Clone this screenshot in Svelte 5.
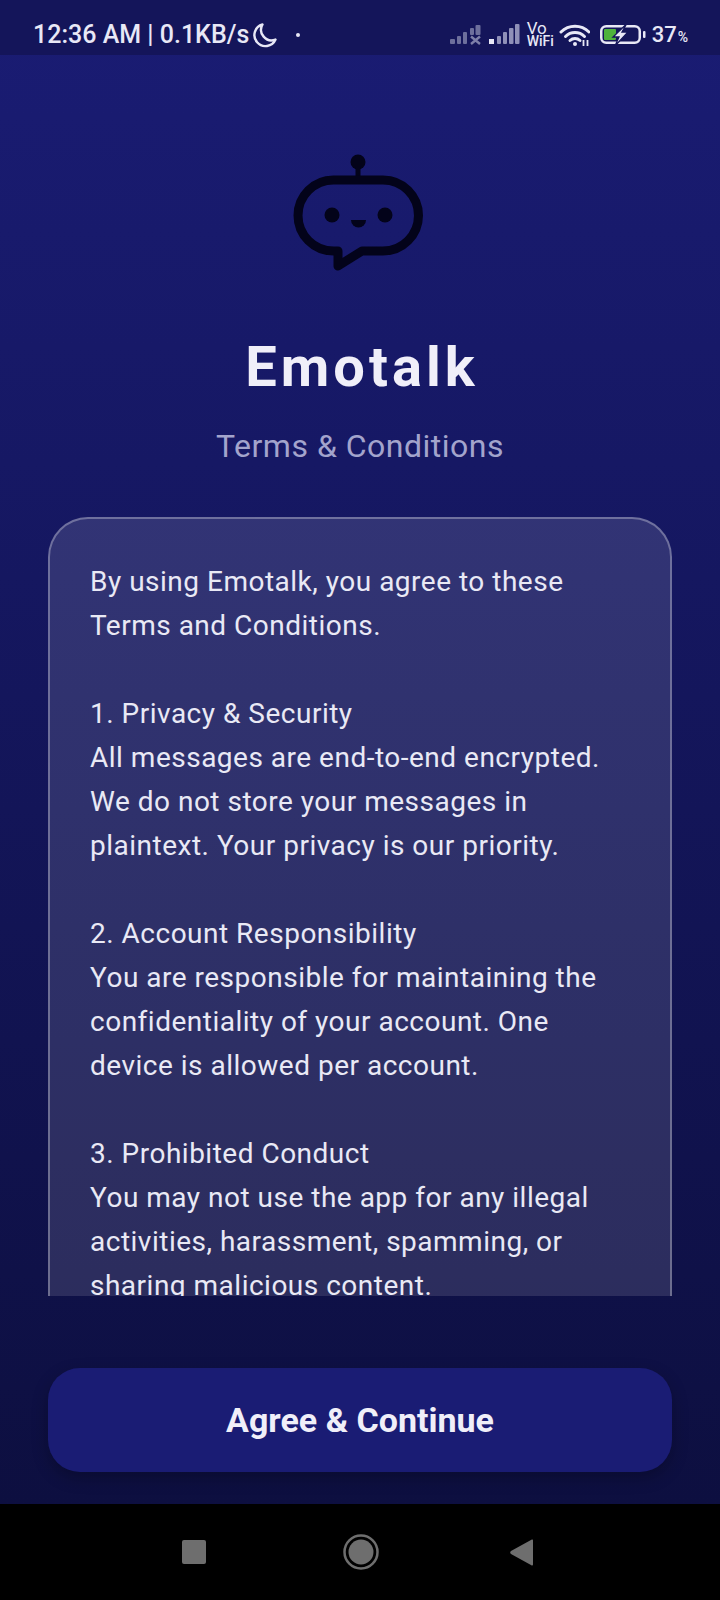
<script>
  const paragraphs = [
    ['By using Emotalk, you agree to these', 'Terms and Conditions.'],
    ['1. Privacy & Security', 'All messages are end-to-end encrypted.', 'We do not store your messages in', 'plaintext. Your privacy is our priority.'],
    ['2. Account Responsibility', 'You are responsible for maintaining the', 'confidentiality of your account. One', 'device is allowed per account.'],
    ['3. Prohibited Conduct', 'You may not use the app for any illegal', 'activities, harassment, spamming, or', 'sharing malicious content.']
  ];
</script>

<div class="screen">
  <header class="status">
    <div class="left">
      <span class="time">12:36 AM | 0.1KB/s</span>
      <svg class="moon" width="24" height="26" viewBox="0 0 24 26"><path d="M9.500 2.500A11 11 0 1 0 22.500 17.500 10.500 10.500 0 0 1 9.500 2.500z" fill="none" stroke="#e8e8f6" stroke-width="2.400" stroke-linejoin="round"/></svg>
      <span class="dot"></span>
    </div>
    <div class="right">
      <svg class="sig1" width="31" height="21" viewBox="0 0 31 21" fill="#6d6f9c">
        <rect x="0" y="15" width="5" height="5" rx="1"/><rect x="7" y="12" width="4" height="8" rx="1"/><rect x="13" y="8" width="4" height="12" rx="1"/><rect x="20" y="4" width="4" height="7" rx="1"/><rect x="25.500" y="1" width="5" height="10" rx="1"/>
        <path d="M21 12.500l9 7.500M30 12.500l-9 7.500" stroke="#7d7fa8" stroke-width="2.400"/>
      </svg>
      <svg class="sig2" width="31" height="21" viewBox="0 0 31 21" fill="#8f90b8">
        <rect x="0" y="15" width="5" height="5" fill="#e8e8f6"/><rect x="8" y="12" width="4" height="8" rx="1"/><rect x="14" y="8" width="4" height="12" rx="1"/><rect x="20" y="4" width="4.500" height="16" rx="1"/><rect x="26" y="0" width="4.500" height="20" rx="1"/>
      </svg>
      <span class="vowifi"><span class="vo">Vo</span><span>WiFi</span></span>
      <svg class="wifi" width="31" height="24" viewBox="0 0 31 24" fill="none" stroke="#e8e8f6" stroke-width="3" stroke-linecap="round">
        <path d="M2 9a20 20 0 0 1 28 0"/><path d="M6.500 13.500a13.500 13.500 0 0 1 19 0"/><path d="M11 17.500a7.500 7.500 0 0 1 10 0"/>
        <circle cx="16" cy="21" r="2" fill="#e8e8f6" stroke="none"/>
        <path d="M24.500 23v-6M28.500 23v-6" stroke-width="1.800" stroke-linecap="butt"/>
      </svg>
      <svg class="batt" width="47" height="22" viewBox="0 0 47 22">
        <rect x="2.250" y="2.250" width="38.500" height="16.500" rx="5" fill="none" stroke="#e8e8f6" stroke-width="2.500"/>
        <rect x="5" y="5" width="12" height="11" rx="1" fill="#4fb33c"/>
        <path d="M27.500 0L14 13h6l-4 9 13-14h-6l4.500-8z" fill="#e8e8f6" stroke="#14155a" stroke-width="1.300"/>
        <rect x="44" y="7" width="2.500" height="7" rx="1" fill="#e8e8f6"/>
      </svg>
      <span class="battery">37<small>%</small></span>
    </div>
  </header>

  <main class="content">
    <svg class="logo" width="130" height="120" viewBox="0 0 130 120" fill="none" stroke="#03031a" stroke-width="9" stroke-linejoin="round" stroke-linecap="round">
      <circle cx="63" cy="8" r="7.500" fill="#03031a" stroke="none"/>
      <path d="M63 12v14" stroke-width="5" stroke-linecap="butt"/>
      <path d="M38.500 26H88A35.500 35.500 0 0 1 88 97H67L43 112V97H38.500A35.500 35.500 0 0 1 38.500 26z"/>
      <circle cx="37" cy="61" r="7.500" fill="#03031a" stroke="none"/>
      <circle cx="90" cy="61" r="7.500" fill="#03031a" stroke="none"/>
      <path d="M56 66h15a7.500 7.500 0 0 1-15 0z" fill="#03031a" stroke="none"/>
    </svg>
    <h1>Emotalk</h1>
    <h2>Terms &amp; Conditions</h2>
    <section class="card">
      {#each paragraphs as lines}
        <p>{#each lines as line}<span>{line}</span>{/each}</p>
      {/each}
    </section>
  </main>

  <div class="actions">
    <button type="button">Agree &amp; Continue</button>
  </div>

  <nav class="navbar">
    <svg class="nav-square" width="24" height="24" viewBox="0 0 24 24"><rect width="24" height="24" rx="2" fill="#6e6e6e"/></svg>
    <svg class="nav-home" width="36" height="36" viewBox="0 0 36 36"><circle cx="18" cy="18" r="16.500" fill="none" stroke="#6e6e6e" stroke-width="2.500"/><circle cx="18" cy="18" r="12.500" fill="#6e6e6e"/></svg>
    <svg class="nav-back" width="23" height="27" viewBox="0 0 23 27"><path d="M23 1.500v24a1 1 0 0 1-1.600.8L1 15a1.800 1.800 0 0 1 0-3L21.400.7A1 1 0 0 1 23 1.500z" fill="#6e6e6e"/></svg>
  </nav>
</div>

<style>
  :global(body) { margin: 0; background: #000; }
  .screen {
    width: 720px; height: 1600px; display: flex; flex-direction: column; overflow: hidden;
    font-family: Roboto, "Liberation Sans", sans-serif;
    background: linear-gradient(180deg, #1a1c74 0, #0d0f40 1504px);
  }
  .status {
    height: 55px; flex: none; background: #14155a; color: #e8e8f6;
    display: flex; justify-content: space-between; align-items: center; box-sizing: border-box;
    padding: 14px 32px 0 33px;
  }
  .left, .right { display: flex; align-items: center; }
  .time { font-size: 25px; font-weight: 500; white-space: nowrap; }
  .moon { margin-left: 4px; }
  .dot { width: 4px; height: 4px; border-radius: 50%; background: #e8e8f6; margin-left: 19px; }
  .sig2 { margin-left: 8px; }
  .vowifi { margin-left: 7px; width: 26px; display: flex; flex-direction: column; font-size: 14px; line-height: 13px; font-weight: 500; }
  .vo { font-size: 17px; font-weight: 400; }
  .wifi { margin-left: 6px; }
  .batt { margin-left: 9px; }
  .battery { font-size: 22px; font-weight: 500; margin-left: 6px; white-space: nowrap; }
  .battery small { font-size: 14px; margin-left: 1px; }
  .content { flex: 1; min-height: 0; padding: 99px 48px 0; display: flex; flex-direction: column; align-items: center; overflow: hidden; }
  .logo { flex: none; overflow: visible; }
  h1 { margin: 60px 0 0; padding-left: 4px; font-size: 56px; line-height: 66px; font-weight: 700; letter-spacing: 4px; color: #f0eff9; }
  h2 { margin: 28px 0 0; font-size: 32px; line-height: 36px; font-weight: 400; letter-spacing: 0.500px; color: #a3a4cc; }
  .card {
    flex: 1; min-height: 0; align-self: stretch; margin-top: 53px; box-sizing: border-box;
    padding: 41px 40px 0; overflow: hidden;
    background: rgba(255,255,255,0.12);
    border: 2px solid rgba(255,255,255,0.3); border-bottom: 0;
    border-radius: 40px 40px 0 0;
    color: #e9e9f5; font-size: 28px; line-height: 44px; letter-spacing: 0.500px;
  }
  p { margin: 0 0 44px; }
  p span { display: block; white-space: nowrap; }
  .actions { flex: none; padding: 72px 48px 32px; }
  button {
    display: block; width: 100%; height: 104px; border: 0; border-radius: 32px; background: #1a1c74;
    color: #f0eff9; font: 700 34px Roboto, sans-serif; box-shadow: 0 6px 16px rgba(0,0,0,0.25);
  }
  .navbar {
    height: 96px; flex: none; background: #000; display: flex; align-items: center; padding-left: 182px;
  }
  .nav-home { margin-left: 137px; }
  .nav-back { margin-left: 131px; }
</style>
